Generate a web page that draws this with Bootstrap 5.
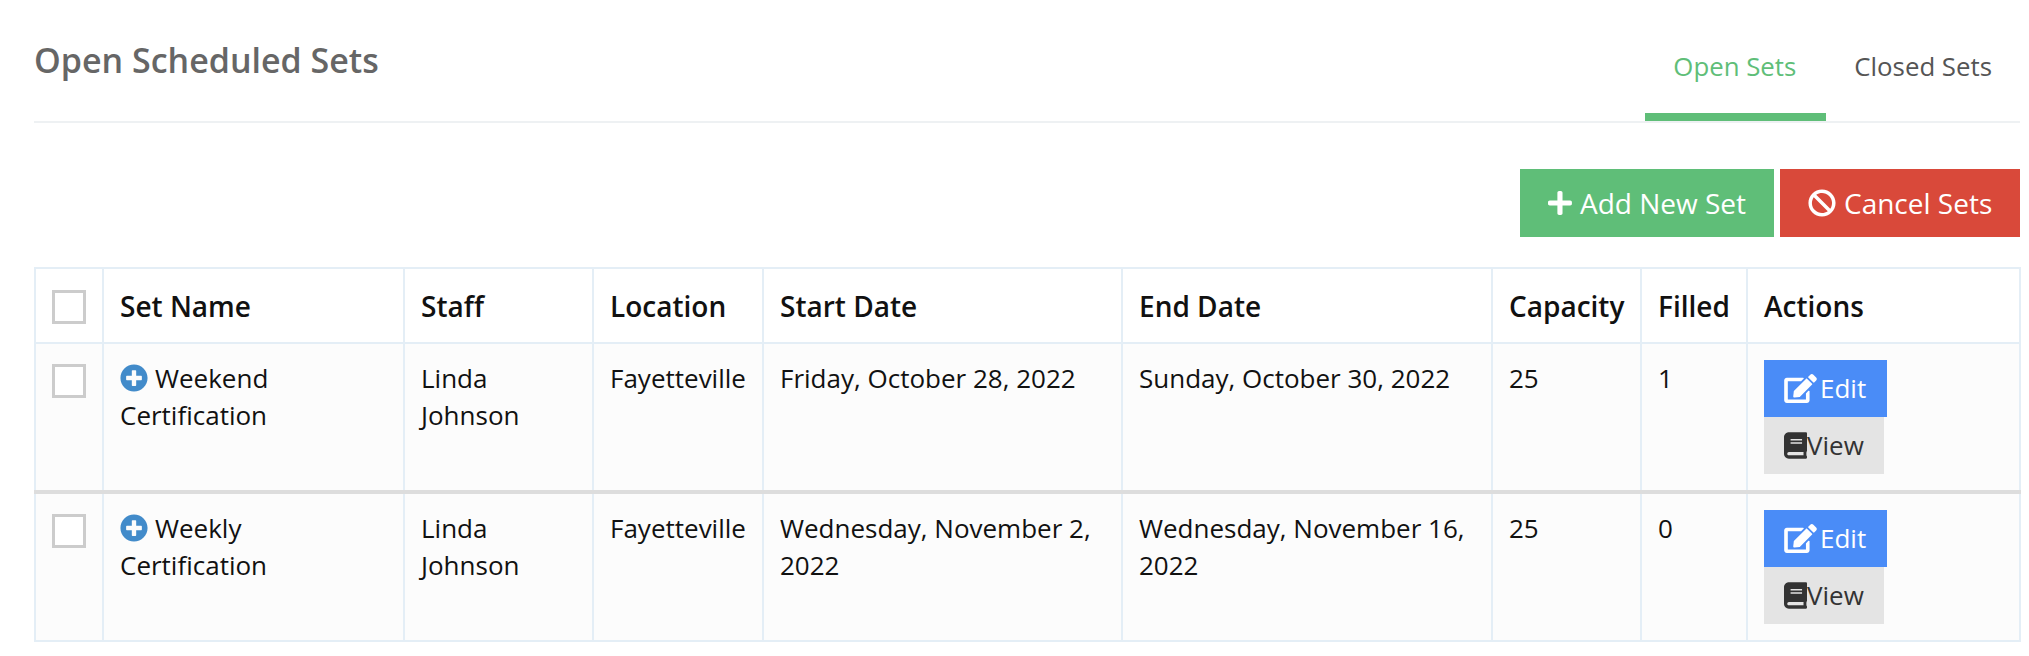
<!DOCTYPE html>
<html lang="en">
<head>
<meta charset="utf-8">
<title>Open Scheduled Sets</title>
<link rel="stylesheet" href="https://cdn.jsdelivr.net/npm/bootstrap@5.3.0/dist/css/bootstrap.min.css">
<style>
body{font-family:"Open Sans","Noto Sans",sans-serif;font-size:26px;line-height:1.5;color:#111;background:#fff}
.sheet{margin-left:34px;width:1986px}
.topbar{height:123px;border-bottom:2px solid #eef1f3}
.page-title{font-size:34px;font-weight:600;color:#666;margin:0;padding-top:38px;line-height:44px}
.tabs-row{height:121px}
.tab-item{display:block;padding:48px 28px 0;height:121px;color:#555;font-size:25.8px;line-height:37.5px;text-decoration:none}
.tab-item.on{color:#5fbe78;border-bottom:8px solid #5fbe78;padding-right:30px}
.tools{padding-top:46px;height:144px;gap:6px}
.tool-btn{height:68px;border-radius:0;border:0;color:#fff;font-size:28px;padding:0 28px;line-height:68px;display:flex;align-items:center;white-space:nowrap}
.tool-btn:hover{color:#fff}
.tool-add{background:#5fbe78;width:254px}
.tool-cancel{background:#d9493a;width:240px;padding-right:20px}
.sets-table{table-layout:fixed;width:1985px;border-collapse:collapse;margin:0;color:#111}
.sets-table th,.sets-table td{border:2px solid #e4eef6;padding:16px;line-height:37px;vertical-align:top;font-size:26px;box-shadow:none}
.sets-table thead th{height:75px;font-weight:600;font-size:28px;vertical-align:middle;background:#fff;padding-top:17px;padding-bottom:15px}
.sets-table tbody td{background:#fcfcfc;height:147px}
.sets-table tr.split td{border-bottom:4px solid #ddd}
.tick{display:block;width:34px;height:34px;border:3px solid #ccc;background:#fff}
.ico{fill:currentColor;display:inline-block}
.ico-plus{width:28px;height:28px;color:#428bca;vertical-align:-4px;margin-right:7px}
.acts{display:flex;flex-direction:column;align-items:flex-start}
.act-btn{height:57px;display:flex;align-items:center;padding:0 20px 2px;border:0;border-radius:0;font-size:26px;line-height:1}
.act-btn .ico{margin-top:2px}
.act-edit{background:#4a8cf7;color:#fff;width:123px}
.act-edit .ico{margin-right:3px}
.act-edit:hover{background:#4a8cf7;color:#fff}
.act-view{background:#e4e4e4;color:#333;width:120px}
.act-view:hover{background:#e4e4e4;color:#333}
</style>
</head>
<body>
<div class="sheet">
  <div class="topbar d-flex justify-content-between">
    <h1 class="page-title">Open Scheduled Sets</h1>
    <ul class="nav tabs-row">
      <li><a class="tab-item on" href="#">Open Sets</a></li>
      <li><a class="tab-item" href="#">Closed Sets</a></li>
    </ul>
  </div>
  <div class="tools d-flex justify-content-end">
    <a class="btn tool-btn tool-add" href="#"><svg class="ico me-2" width="25" height="28" viewBox="0 0 448 512"><path d="M416 208H272V64c0-17.67-14.33-32-32-32h-32c-17.67 0-32 14.33-32 32v144H32c-17.67 0-32 14.33-32 32v32c0 17.67 14.33 32 32 32h144v144c0 17.67 14.33 32 32 32h32c17.67 0 32-14.33 32-32V304h144c17.67 0 32-14.33 32-32v-32c0-17.67-14.33-32-32-32z"/></svg>Add New Set</a>
    <a class="btn tool-btn tool-cancel" href="#"><svg class="ico me-2" width="28" height="28" viewBox="0 0 512 512"><path d="M256 8C119.034 8 8 119.033 8 256s111.034 248 248 248 248-111.034 248-248S392.967 8 256 8zm130.108 117.892c65.448 65.448 70 165.481 20.677 235.637L150.47 105.216c70.204-49.356 170.226-44.735 235.638 20.676zM125.892 386.108c-65.448-65.448-70-165.481-20.677-235.637L361.53 406.784c-70.203 49.356-170.226 44.736-235.638-20.676z"/></svg>Cancel Sets</a>
  </div>
  <table class="table sets-table">
    <colgroup><col style="width:68px"><col style="width:301px"><col style="width:189px"><col style="width:170px"><col style="width:359px"><col style="width:370px"><col style="width:149px"><col style="width:106px"><col style="width:273px"></colgroup>
    <thead><tr><th><span class="tick"></span></th><th>Set Name</th><th>Staff</th><th>Location</th><th>Start Date</th><th>End Date</th><th>Capacity</th><th>Filled</th><th>Actions</th></tr></thead>
    <tbody>
      <tr class="split">
        <td><span class="tick mt-1"></span></td>
        <td><svg class="ico ico-plus" viewBox="0 0 512 512"><path d="M256 8C119 8 8 119 8 256s111 248 248 248 248-111 248-248S393 8 256 8zm144 276c0 6.6-5.4 12-12 12h-92v92c0 6.6-5.4 12-12 12h-56c-6.6 0-12-5.4-12-12v-92h-92c-6.6 0-12-5.4-12-12v-56c0-6.6 5.4-12 12-12h92v-92c0-6.6 5.4-12 12-12h56c6.6 0 12 5.4 12 12v92h92c6.6 0 12 5.4 12 12v56z"/></svg>Weekend<br>Certification</td>
        <td>Linda Johnson</td><td>Fayetteville</td><td>Friday, October 28, 2022</td><td>Sunday, October 30, 2022</td><td>25</td><td>1</td>
        <td><div class="acts">
          <a class="btn act-btn act-edit" href="#"><svg class="ico" width="33" height="29" viewBox="0 0 576 512"><path d="M402.6 83.2l90.2 90.2c3.8 3.8 3.8 10 0 13.8L274.4 405.6l-92.8 10.3c-12.4 1.4-22.9-9.1-21.5-21.5l10.3-92.8L388.8 83.2c3.8-3.8 10-3.8 13.8 0zm162-22.9l-48.8-48.8c-15.2-15.2-39.9-15.2-55.2 0l-35.4 35.4c-3.8 3.8-3.8 10 0 13.8l90.2 90.2c3.8 3.8 10 3.8 13.8 0l35.4-35.4c15.2-15.3 15.2-40 0-55.2zM384 346.2V448H64V128h229.8c3.2 0 6.2-1.3 8.5-3.5l40-40c7.6-7.6 2.2-20.5-8.5-20.5H48C21.5 64 0 85.5 0 112v352c0 26.5 21.5 48 48 48h352c26.5 0 48-21.5 48-48V306.2c0-10.7-12.9-16-20.5-8.5l-40 40c-2.2 2.3-3.5 5.3-3.5 8.5z"/></svg>Edit</a>
          <a class="btn act-btn act-view" href="#"><svg class="ico" width="23" height="27" viewBox="0 0 448 512"><path d="M448 360V24c0-13.3-10.7-24-24-24H96C43 0 0 43 0 96v320c0 53 43 96 96 96h328c13.3 0 24-10.7 24-24v-16c0-7.5-3.5-14.3-8.9-18.7-4.2-15.4-4.2-59.3 0-74.7 5.4-4.3 8.9-11.1 8.9-18.6zM128 134c0-3.3 2.7-6 6-6h212c3.3 0 6 2.7 6 6v20c0 3.3-2.7 6-6 6H134c-3.3 0-6-2.7-6-6v-20zm0 64c0-3.3 2.7-6 6-6h212c3.3 0 6 2.7 6 6v20c0 3.3-2.7 6-6 6H134c-3.3 0-6-2.7-6-6v-20zm253.4 250H96c-17.7 0-32-14.3-32-32 0-17.6 14.4-32 32-32h285.4c-1.9 17.1-1.9 46.9 0 64z"/></svg>View</a>
        </div></td>
      </tr>
      <tr>
        <td><span class="tick mt-1"></span></td>
        <td><svg class="ico ico-plus" viewBox="0 0 512 512"><path d="M256 8C119 8 8 119 8 256s111 248 248 248 248-111 248-248S393 8 256 8zm144 276c0 6.6-5.4 12-12 12h-92v92c0 6.6-5.4 12-12 12h-56c-6.6 0-12-5.4-12-12v-92h-92c-6.6 0-12-5.4-12-12v-56c0-6.6 5.4-12 12-12h92v-92c0-6.6 5.4-12 12-12h56c6.6 0 12 5.4 12 12v92h92c6.6 0 12 5.4 12 12v56z"/></svg>Weekly<br>Certification</td>
        <td>Linda Johnson</td><td>Fayetteville</td><td>Wednesday, November 2, 2022</td><td>Wednesday, November 16, 2022</td><td>25</td><td>0</td>
        <td><div class="acts">
          <a class="btn act-btn act-edit" href="#"><svg class="ico" width="33" height="29" viewBox="0 0 576 512"><path d="M402.6 83.2l90.2 90.2c3.8 3.8 3.8 10 0 13.8L274.4 405.6l-92.8 10.3c-12.4 1.4-22.9-9.1-21.5-21.5l10.3-92.8L388.8 83.2c3.8-3.8 10-3.8 13.8 0zm162-22.9l-48.8-48.8c-15.2-15.2-39.9-15.2-55.2 0l-35.4 35.4c-3.8 3.8-3.8 10 0 13.8l90.2 90.2c3.8 3.8 10 3.8 13.8 0l35.4-35.4c15.2-15.3 15.2-40 0-55.2zM384 346.2V448H64V128h229.8c3.2 0 6.2-1.3 8.5-3.5l40-40c7.6-7.6 2.2-20.5-8.5-20.5H48C21.5 64 0 85.5 0 112v352c0 26.5 21.5 48 48 48h352c26.5 0 48-21.5 48-48V306.2c0-10.7-12.9-16-20.5-8.5l-40 40c-2.2 2.3-3.5 5.3-3.5 8.5z"/></svg>Edit</a>
          <a class="btn act-btn act-view" href="#"><svg class="ico" width="23" height="27" viewBox="0 0 448 512"><path d="M448 360V24c0-13.3-10.7-24-24-24H96C43 0 0 43 0 96v320c0 53 43 96 96 96h328c13.3 0 24-10.7 24-24v-16c0-7.5-3.5-14.3-8.9-18.7-4.2-15.4-4.2-59.3 0-74.7 5.4-4.3 8.9-11.1 8.9-18.6zM128 134c0-3.3 2.7-6 6-6h212c3.3 0 6 2.7 6 6v20c0 3.3-2.7 6-6 6H134c-3.3 0-6-2.7-6-6v-20zm0 64c0-3.3 2.7-6 6-6h212c3.3 0 6 2.7 6 6v20c0 3.3-2.7 6-6 6H134c-3.3 0-6-2.7-6-6v-20zm253.4 250H96c-17.7 0-32-14.3-32-32 0-17.6 14.4-32 32-32h285.4c-1.9 17.1-1.9 46.9 0 64z"/></svg>View</a>
        </div></td>
      </tr>
    </tbody>
  </table>
</div>
<script src="https://cdn.jsdelivr.net/npm/bootstrap@5.3.0/dist/js/bootstrap.bundle.min.js"></script>
</body>
</html>
